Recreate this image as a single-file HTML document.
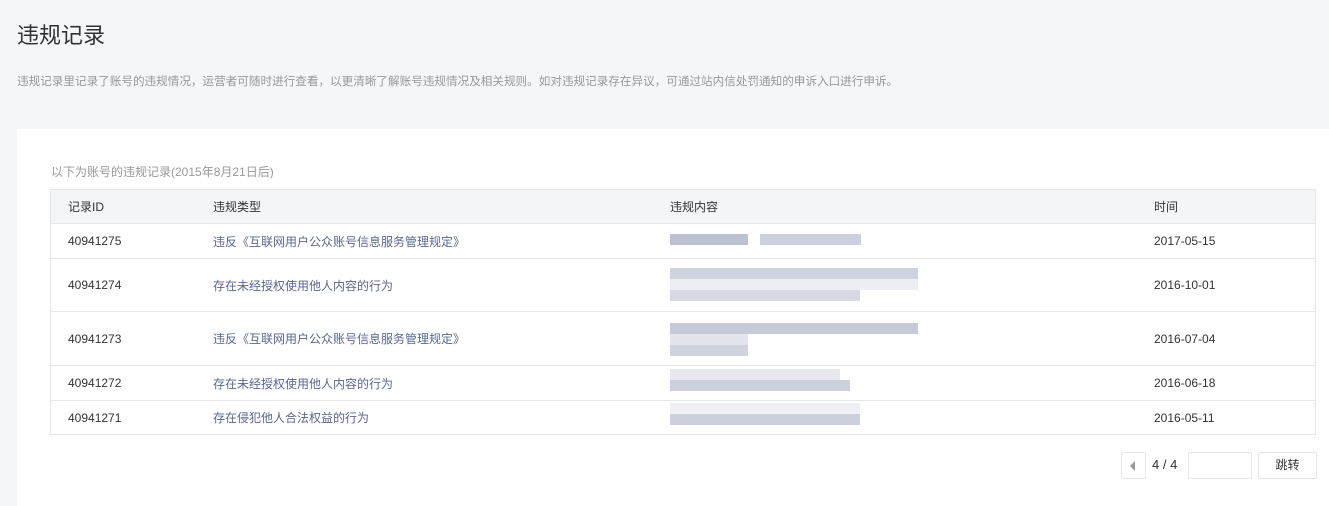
<!DOCTYPE html>
<html><head><meta charset="utf-8"><style>
html,body{margin:0;height:506px;overflow:hidden}
body{width:1329px;background:#f5f6f8;font-family:"Liberation Sans","Noto Sans CJK SC",sans-serif;position:relative}
.a{position:absolute;white-space:nowrap}
h1{position:absolute;left:17px;top:18px;margin:0;font-size:22px;font-weight:normal;color:#333}
.desc{left:17px;top:73px;font-size:11.6px;color:#999}
.panel{position:absolute;left:17px;top:129px;width:1312px;height:377px;background:#fff}
.sub{left:51px;top:163px;font-size:12px;color:#999}
table{position:absolute;left:50px;top:189px;width:1266px;border-collapse:collapse;font-size:12px;color:#333;border:1px solid #e4e6eb}
th{background:#f4f5f9;font-weight:normal;text-align:left;height:33px;padding:0;border-bottom:1px solid #e4e6eb}
td{padding:0;border-bottom:1px solid #e4e6eb}
td:first-child,th:first-child{padding-left:17px;width:145px}
.lk{color:#5a6790}
.b{position:absolute;height:11px}
.btn{position:absolute;border:1px solid #e4e6eb;border-radius:2px;background:#fff;box-sizing:border-box}
</style></head><body>
<h1>违规记录</h1>
<div class="a desc">违规记录里记录了账号的违规情况，运营者可随时进行查看，以更清晰了解账号违规情况及相关规则。如对违规记录存在异议，可通过站内信处罚通知的申诉入口进行申诉。</div>
<div class="panel"></div>
<div class="a sub">以下为账号的违规记录(2015年8月21日后)</div>
<table>
<tr><th>记录ID</th><th style="width:457px">违规类型</th><th style="width:484px">违规内容</th><th>时间</th></tr>
<tr style="height:35px"><td>40941275</td><td class="lk">违反《互联网用户公众账号信息服务管理规定》</td><td></td><td>2017-05-15</td></tr>
<tr style="height:53px"><td>40941274</td><td class="lk">存在未经授权使用他人内容的行为</td><td></td><td>2016-10-01</td></tr>
<tr style="height:54px"><td>40941273</td><td class="lk">违反《互联网用户公众账号信息服务管理规定》</td><td></td><td>2016-07-04</td></tr>
<tr style="height:35px"><td>40941272</td><td class="lk">存在未经授权使用他人内容的行为</td><td></td><td>2016-06-18</td></tr>
<tr style="height:34px"><td>40941271</td><td class="lk">存在侵犯他人合法权益的行为</td><td></td><td>2016-05-11</td></tr>
</table>
<div class="b" style="left:670px;top:234px;width:78px;background:#bcc1d2"></div>
<div class="b" style="left:760px;top:234px;width:101px;background:#ccd0dc"></div>
<div class="b" style="left:670px;top:268px;width:248px;background:#cfd3de"></div>
<div class="b" style="left:670px;top:279px;width:248px;background:#eceef3"></div>
<div class="b" style="left:670px;top:290px;width:190px;background:#d6d9e2"></div>
<div class="b" style="left:670px;top:323px;width:248px;background:#c6cad9"></div>
<div class="b" style="left:670px;top:334px;width:78px;background:#e2e5ec"></div>
<div class="b" style="left:670px;top:345px;width:78px;background:#cfd3de"></div>
<div class="b" style="left:670px;top:369px;width:170px;background:#e7e9ef"></div>
<div class="b" style="left:670px;top:380px;width:180px;background:#cdd1dd"></div>
<div class="b" style="left:670px;top:403px;width:190px;background:#eef0f4"></div>
<div class="b" style="left:670px;top:414px;width:190px;background:#cbd0dc"></div>
<div class="btn" style="left:1121px;top:452px;width:25px;height:27px"></div>
<div class="a" style="left:1130px;top:461px;width:0;height:0;border-top:5px solid transparent;border-bottom:5px solid transparent;border-right:5px solid #999"></div>
<div class="a" style="left:1152px;top:457px;font-size:13px;color:#333">4 / 4</div>
<div class="btn" style="left:1188px;top:452px;width:64px;height:27px"></div>
<div class="btn" style="left:1258px;top:452px;width:59px;height:27px;font-size:12px;color:#333;text-align:center;line-height:25px">跳转</div>
</body></html>
